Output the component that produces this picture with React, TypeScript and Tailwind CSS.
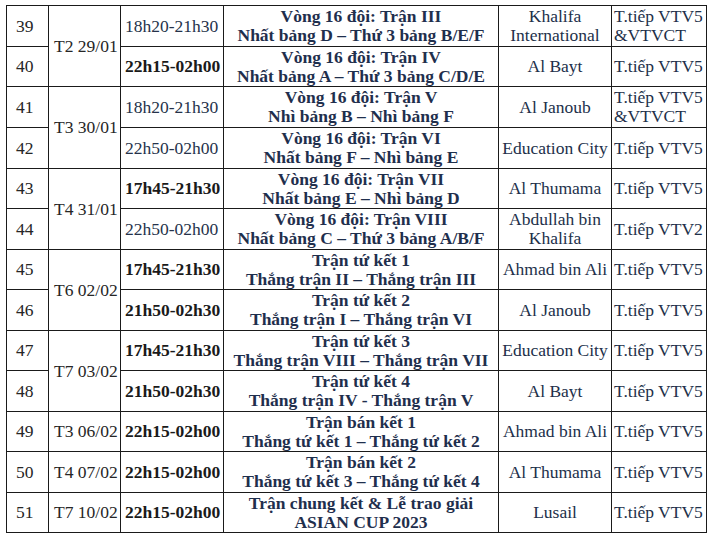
import React from "react";

type Row = {
  no: number;
  date?: string;
  span?: number;
  time: string;
  boldTime: boolean;
  match: [string, string];
  venue: string[];
  tv: string[];
  h: string;
};

const rows: Row[] = [
  { no: 39, date: "T2 29/01", span: 2, time: "18h20-21h30", boldTime: false, match: ["Vòng 16 đội: Trận III", "Nhất bảng D – Thứ 3 bảng B/E/F"], venue: ["Khalifa", "International"], tv: ["T.tiếp VTV5", "&VTVCT"], h: "h-[41px]" },
  { no: 40, time: "22h15-02h00", boldTime: true, match: ["Vòng 16 đội: Trận IV", "Nhất bảng A – Thứ 3 bảng C/D/E"], venue: ["Al Bayt"], tv: ["T.tiếp VTV5"], h: "h-[40px]" },
  { no: 41, date: "T3 30/01", span: 2, time: "18h20-21h30", boldTime: false, match: ["Vòng 16 đội: Trận V", "Nhì bảng B – Nhì bảng F"], venue: ["Al Janoub"], tv: ["T.tiếp VTV5", "&VTVCT"], h: "h-[41px]" },
  { no: 42, time: "22h50-02h00", boldTime: false, match: ["Vòng 16 đội: Trận VI", "Nhất bảng F – Nhì bảng E"], venue: ["Education City"], tv: ["T.tiếp VTV5"], h: "h-[41px]" },
  { no: 43, date: "T4 31/01", span: 2, time: "17h45-21h30", boldTime: true, match: ["Vòng 16 đội: Trận VII", "Nhất bảng E – Nhì bảng D"], venue: ["Al Thumama"], tv: ["T.tiếp VTV5"], h: "h-[40px]" },
  { no: 44, time: "22h50-02h00", boldTime: false, match: ["Vòng 16 đội: Trận VIII", "Nhất bảng C – Thứ 3 bảng A/B/F"], venue: ["Abdullah bin", "Khalifa"], tv: ["T.tiếp VTV2"], h: "h-[41px]" },
  { no: 45, date: "T6 02/02", span: 2, time: "17h45-21h30", boldTime: true, match: ["Trận tứ kết 1", "Thắng trận II – Thắng trận III"], venue: ["Ahmad bin Ali"], tv: ["T.tiếp VTV5"], h: "h-[40px]" },
  { no: 46, time: "21h50-02h30", boldTime: true, match: ["Trận tứ kết 2", "Thắng trận I – Thắng trận VI"], venue: ["Al Janoub"], tv: ["T.tiếp VTV5"], h: "h-[41px]" },
  { no: 47, date: "T7 03/02", span: 2, time: "17h45-21h30", boldTime: true, match: ["Trận tứ kết 3", "Thắng trận VIII – Thắng trận VII"], venue: ["Education City"], tv: ["T.tiếp VTV5"], h: "h-[40px]" },
  { no: 48, time: "21h50-02h30", boldTime: true, match: ["Trận tứ kết 4", "Thắng trận IV - Thắng trận V"], venue: ["Al Bayt"], tv: ["T.tiếp VTV5"], h: "h-[41px]" },
  { no: 49, date: "T3 06/02", span: 1, time: "22h15-02h00", boldTime: true, match: ["Trận bán kết 1", "Thắng tứ kết 1 – Thắng tứ kết 2"], venue: ["Ahmad bin Ali"], tv: ["T.tiếp VTV5"], h: "h-[40px]" },
  { no: 50, date: "T4 07/02", span: 1, time: "22h15-02h00", boldTime: true, match: ["Trận bán kết 2", "Thắng tứ kết 3 – Thắng tứ kết 4"], venue: ["Al Thumama"], tv: ["T.tiếp VTV5"], h: "h-[41px]" },
  { no: 51, date: "T7 10/02", span: 1, time: "22h15-02h00", boldTime: true, match: ["Trận chung kết & Lễ trao giải", "ASIAN CUP 2023"], venue: ["Lusail"], tv: ["T.tiếp VTV5"], h: "h-[40px]" },
];

const cell = "border border-[#1a1a1a] align-middle p-0";

export default function App() {
  return (
    <main className="min-h-[537px] w-[713px] bg-white pl-[6px] pt-[5px] font-[family-name:'Liberation_Serif','Times_New_Roman',serif] text-[17.5px] leading-[19px] text-[#222]">
      <table className="w-[700px] table-fixed border-collapse">
        <colgroup>
          <col className="w-[42px]" />
          <col className="w-[72px]" />
          <col className="w-[103px]" />
          <col className="w-[275px]" />
          <col className="w-[113px]" />
          <col className="w-[95px]" />
        </colgroup>
        <tbody>
          {rows.map((r) => (
            <tr key={r.no} className={r.h}>
              <td className={`${cell} pl-[9px] text-[#262626]`}>{r.no}</td>

              {r.date && (
                <td rowSpan={r.span} className={`${cell} pl-[5px] whitespace-nowrap text-[#262626]`}>
                  {r.date}
                </td>
              )}

              <td
                className={
                  r.boldTime
                    ? `${cell} pl-[4px] whitespace-nowrap font-bold text-[#1a1a1a]`
                    : `${cell} pl-[4px] whitespace-nowrap text-[#25324a]`
                }
              >
                {r.time}
              </td>

              <td className={`${cell} text-center font-bold whitespace-nowrap text-[#1f2f4d]`}>
                <div>{r.match[0]}</div>
                <div>{r.match[1]}</div>
              </td>

              <td className={`${cell} text-center whitespace-nowrap text-[#22304a]`}>
                {r.venue.map((v) => (
                  <div key={v}>{v}</div>
                ))}
              </td>

              <td className={`${cell} pl-[2px] whitespace-nowrap text-[#22304a]`}>
                {r.tv.map((t) => (
                  <div key={t}>{t}</div>
                ))}
              </td>
            </tr>
          ))}
        </tbody>
      </table>
    </main>
  );
}
